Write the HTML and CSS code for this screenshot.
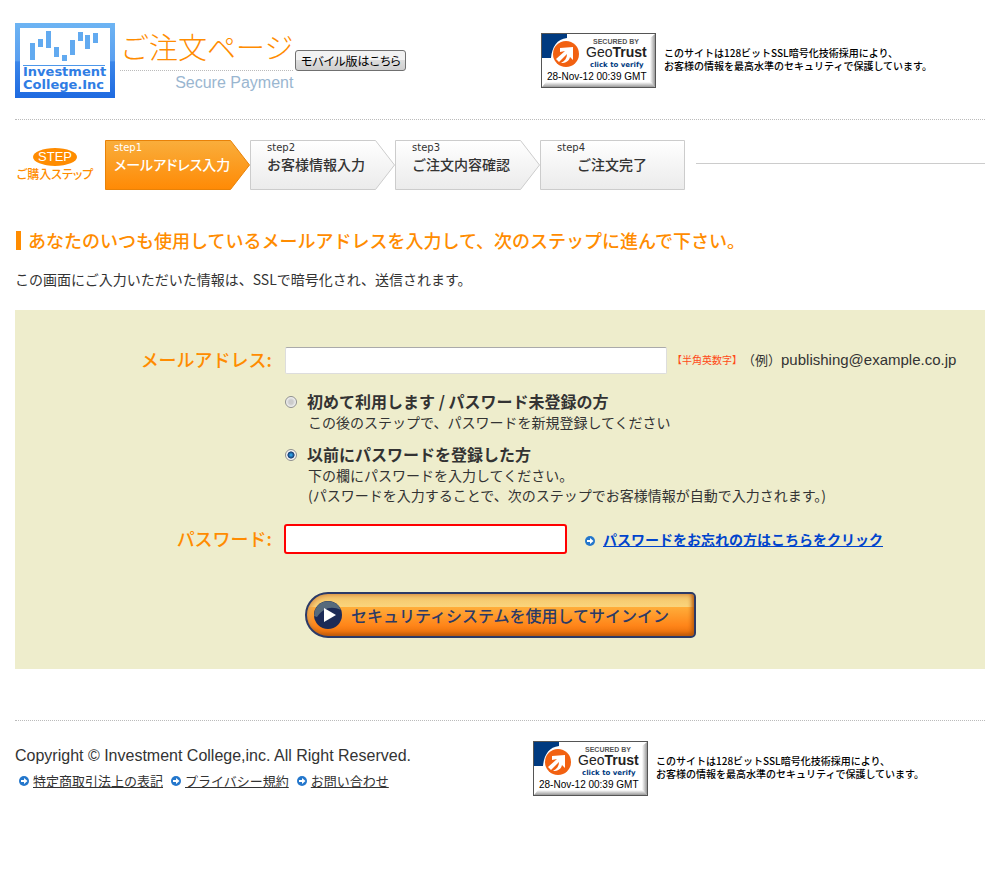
FILE: index.html
```
<!DOCTYPE html>
<html lang="ja">
<head>
    <meta charset="UTF-8">
    <meta name="viewport" content="width=device-width, initial-scale=1.0">
    <title>ご注文ページ</title>
    <link rel="stylesheet" href="styles.css">
</head>
<body>
    <!-- shared drawings -->
    <svg class="defs" width="0" height="0" aria-hidden="true">
        <defs>
            <linearGradient id="blue" x1="0" y1="0" x2="0" y2="1">
                <stop offset="0" stop-color="#6db4f3"/>
                <stop offset=".5" stop-color="#5a9ff0"/>
                <stop offset=".52" stop-color="#3b86ea"/>
                <stop offset="1" stop-color="#1e6ae0"/>
            </linearGradient>
            <linearGradient id="orange" x1="0" y1="0" x2="0" y2="1">
                <stop offset="0" stop-color="#f9ae3c"/>
                <stop offset="1" stop-color="#ff8a05"/>
            </linearGradient>
            <linearGradient id="gray" x1="0" y1="0" x2="0" y2="1">
                <stop offset="0" stop-color="#ffffff"/>
                <stop offset="1" stop-color="#ebebeb"/>
            </linearGradient>
            <linearGradient id="shade" x1="0" y1="0" x2="1" y2="0">
                <stop offset="0" stop-color="#ffffff"/>
                <stop offset="1" stop-color="#999999"/>
            </linearGradient>
            <linearGradient id="shadeDown" x1="0" y1="0" x2="0" y2="1">
                <stop offset="0" stop-color="#ffffff"/>
                <stop offset="1" stop-color="#999999"/>
            </linearGradient>
        </defs>
        <symbol id="bullet" viewBox="0 0 10 10">
            <circle cx="5" cy="5" r="5" fill="#2477cc"/>
            <path d="M2 4h3V2l3.5 3L5 8V6H2z" fill="#fff"/>
        </symbol>
        <symbol id="seal" viewBox="0 0 115 55">
            <rect x=".5" y=".5" width="114" height="54" fill="#fff" stroke="#555"/>
            <path d="M109 5l5-4v53l-5-4z" fill="url(#shade)"/>
            <path d="M5 49h105l4 5H1z" fill="url(#shadeDown)"/>
            <path d="M1 1h25v4C16 6 11 14 10 25H1z" fill="#003a80"/>
            <circle cx="25" cy="21" r="13" fill="#f26111"/>
            <path d="M19 15l13-1v13l-3-3c-1 4-4 6-9 6 4-2 6-5 6-9l-8 8-3-3 9-8-5 1z" fill="#fff"/>
        </symbol>
    </svg>

    <header class="header">
        <div class="brand">
            <svg class="logo" viewBox="0 0 100 75" role="img" aria-label="Investment College.Inc">
                <rect width="100" height="75" fill="url(#blue)"/>
                <rect x="5" y="5" width="90" height="64" fill="#fff"/>
                <g fill="#62aaf0">
                    <rect x="15" y="20" width="5" height="17"/>
                    <rect x="23" y="16" width="5" height="8"/>
                    <rect x="31" y="8" width="5" height="17"/>
                    <rect x="39" y="24" width="5" height="10"/>
                    <rect x="47" y="32" width="5" height="6"/>
                    <rect x="55" y="17" width="5" height="15"/>
                    <rect x="63" y="9" width="5" height="9"/>
                    <rect x="70" y="12" width="5" height="14"/>
                    <rect x="78" y="10" width="5" height="10"/>
                </g>
                <path d="M8 42.500h82" stroke="#4d97ea"/>
                <text x="8" y="53" class="logo-text">Investment</text>
                <text x="8" y="66" class="logo-text">College.Inc</text>
            </svg>
            <div class="title">
                <h1>ご注文ページ</h1>
                <p>Secure Payment</p>
            </div>
            <button type="button" class="mobile">モバイル版はこちら</button>
        </div>
        <div class="security">
            <svg class="seal" viewBox="0 0 115 55" role="img" aria-label="GeoTrust">
                <use href="#seal"/>
                <text x="52" y="11" class="seal-by">SECURED BY</text>
                <text x="45" y="24" class="seal-name">Geo<tspan class="seal-trust">Trust</tspan></text>
                <text x="49" y="34" class="seal-click">click to verify</text>
                <text x="6" y="47" class="seal-date">28-Nov-12 00:39 GMT</text>
            </svg>
            <p>このサイトは128ビットSSL暗号化技術採用により、<br>お客様の情報を最高水準のセキュリティで保護しています。</p>
        </div>
    </header>

    <div class="progress">
        <div class="progress-label">
            <span>STEP</span>
            <b>ご購入ステップ</b>
        </div>
        <ol class="steps">
            <li class="step active">
                <svg viewBox="0 0 145 50"><path d="M.5.5h125L144.500 25l-19 24.500H.5z" fill="url(#orange)" stroke="#e88208"/></svg>
                <div><small>step1</small>メールアドレス入力</div>
            </li>
            <li class="step">
                <svg viewBox="0 0 145 50"><path d="M.5.5h125L144.500 25l-19 24.500H.5z" fill="url(#gray)" stroke="#ccc"/></svg>
                <div><small>step2</small>お客様情報入力</div>
            </li>
            <li class="step">
                <svg viewBox="0 0 145 50"><path d="M.5.5h125L144.500 25l-19 24.500H.5z" fill="url(#gray)" stroke="#ccc"/></svg>
                <div><small>step3</small>ご注文内容確認</div>
            </li>
            <li class="step last">
                <svg viewBox="0 0 145 50"><path d="M.5.5h144v49H.5z" fill="url(#gray)" stroke="#ccc"/></svg>
                <div><small>step4</small><span>ご注文完了</span></div>
            </li>
        </ol>
        <hr>
    </div>

    <main>
        <h2>あなたのいつも使用しているメールアドレスを入力して、次のステップに進んで下さい。</h2>
        <p class="lead">この画面にご入力いただいた情報は、SSLで暗号化され、送信されます。</p>

        <form class="signin">
            <div class="row">
                <label class="name" for="email">メールアドレス:</label>
                <input type="text" id="email" class="email">
                <span class="note">【半角英数字】</span>
                <span class="example">（例）<span>publishing@example.co.jp</span></span>
            </div>
            <div class="choices">
                <div class="choice">
                    <input type="radio" name="member" id="new">
                    <div>
                        <label for="new">初めて利用します / パスワード未登録の方</label>
                        <p>この後のステップで、パスワードを新規登録してください</p>
                    </div>
                </div>
                <div class="choice">
                    <input type="radio" name="member" id="registered" checked>
                    <div>
                        <label for="registered">以前にパスワードを登録した方</label>
                        <p>下の欄にパスワードを入力してください。<br>(パスワードを入力することで、次のステップでお客様情報が自動で入力されます。)</p>
                    </div>
                </div>
            </div>
            <div class="row">
                <label class="name" for="password">パスワード:</label>
                <input type="password" id="password" class="password">
                <svg class="bullet"><use href="#bullet"/></svg>
                <a href="#" class="forgot">パスワードをお忘れの方はこちらをクリック</a>
            </div>
            <button type="submit" class="submit">
                <svg viewBox="0 0 28 28">
                    <circle cx="14" cy="14" r="14" fill="#1c2b57"/>
                    <path d="M1 9a14 14 0 0 1 26 0C18 5 10 6 3 16l-3-1z" fill="#566a7c"/>
                    <path d="M10 7l12 7-12 7z" fill="#fff"/>
                </svg>
                セキュリティシステムを使用してサインイン
            </button>
        </form>
    </main>

    <footer class="footer">
        <div class="legal">
            <p>Copyright © Investment College,inc. All Right Reserved.</p>
            <ul>
                <li><svg class="bullet"><use href="#bullet"/></svg><a href="#">特定商取引法上の表記</a></li>
                <li><svg class="bullet"><use href="#bullet"/></svg><a href="#">プライバシー規約</a></li>
                <li><svg class="bullet"><use href="#bullet"/></svg><a href="#">お問い合わせ</a></li>
            </ul>
        </div>
        <div class="security">
            <svg class="seal" viewBox="0 0 115 55" role="img" aria-label="GeoTrust">
                <use href="#seal"/>
                <text x="52" y="11" class="seal-by">SECURED BY</text>
                <text x="45" y="24" class="seal-name">Geo<tspan class="seal-trust">Trust</tspan></text>
                <text x="49" y="34" class="seal-click">click to verify</text>
                <text x="6" y="47" class="seal-date">28-Nov-12 00:39 GMT</text>
            </svg>
            <p>このサイトは128ビットSSL暗号化技術採用により、<br>お客様の情報を最高水準のセキュリティで保護しています。</p>
        </div>
    </footer>
</body>
</html>
```
FILE: styles.css
```
* {
    box-sizing: border-box;
}

body {
    margin: 0;
    padding: 23px 15px;
    background-color: #fff;
    color: #333;
    font-family: "Noto Sans CJK JP", sans-serif;
    font-size: 14px;
    line-height: 20px;
}

h1, h2, p, ul, ol {
    margin: 0;
    padding: 0;
    list-style: none;
}

.defs {
    position: absolute;
}

/* header */
.header {
    display: flex;
    justify-content: space-between;
    height: 97px;
    border-bottom: 1px dotted #bbb;
}

.brand {
    display: flex;
}

.logo {
    width: 100px;
    height: 75px;
}

.logo-text {
    fill: #2f7de4;
    font-family: "DejaVu Sans", sans-serif;
    font-weight: bold;
    font-size: 13px;
}

.title {
    margin: 0 2px 0 5px;
}

.title h1 {
    height: 48px;
    border-bottom: 1px dotted #bbb;
    color: #ff8c00;
    font-size: 29px;
    font-weight: 300;
    line-height: 46px;
}

.title p {
    color: #9ab6d0;
    font-family: "Liberation Sans", sans-serif;
    font-size: 16px;
    line-height: 24px;
    text-align: right;
}

.mobile {
    width: 111px;
    height: 21px;
    margin-top: 27px;
    padding: 0;
    border: 1px solid #707070;
    border-radius: 3px;
    background: linear-gradient(#f2f2f2 50%, #dddddd 50%, #cfcfcf);
    color: #000;
    font-family: inherit;
    font-size: 12px;
    line-height: 18px;
    font-feature-settings: "palt";
    white-space: nowrap;
}

.security {
    display: flex;
    gap: 8px;
    width: 444px;
    padding-top: 10px;
}

.security p {
    padding-top: 13px;
    color: #000;
    font-size: 10px;
    font-weight: 500;
    line-height: 13px;
}

.seal {
    flex: none;
    width: 115px;
    height: 55px;
}

.seal-by {
    fill: #555;
    font: bold 7px "Liberation Sans", sans-serif;
}

.seal-name {
    fill: #222;
    font: 14px "Liberation Sans", sans-serif;
}

.seal-trust {
    font-weight: bold;
}

.seal-click {
    fill: #003a80;
    font: bold 7px "DejaVu Sans", sans-serif;
}

.seal-date {
    fill: #000;
    font: 10px "Liberation Sans", sans-serif;
}

/* order steps */
.progress {
    display: flex;
    margin-top: 20px;
}

.progress-label {
    display: flex;
    flex-direction: column;
    align-items: center;
    width: 80px;
    margin-right: 10px;
    padding-top: 8px;
    color: #ff8c00;
}

.progress-label span {
    width: 44px;
    height: 18px;
    border-radius: 50%;
    background-color: #ff8c00;
    color: #fff;
    font-family: "Liberation Sans", sans-serif;
    font-size: 13px;
    line-height: 18px;
    text-align: center;
}

.progress-label b {
    font-size: 12px;
    font-weight: 500;
    line-height: 16px;
    font-feature-settings: "palt";
    white-space: nowrap;
}

.steps {
    display: flex;
}

.step {
    display: grid;
    width: 145px;
    height: 50px;
    font-size: 14px;
    font-weight: 500;
}

.step svg,
.step div {
    grid-area: 1 / 1;
}

.step div {
    padding: 2px 0 0 17px;
    white-space: nowrap;
}

.step small {
    display: block;
    font-family: "DejaVu Sans", sans-serif;
    font-size: 10px;
    line-height: 12px;
}

.step.active {
    color: #fff;
    font-feature-settings: "palt";
}

.step.active div {
    padding-left: 9px;
}

.step.last span {
    padding-left: 20px;
}

.progress hr {
    flex: 1;
    height: 0;
    margin: 23px 0 0 11px;
    border: 0;
    border-top: 1px solid #ccc;
}

/* sign in */
h2 {
    display: flex;
    align-items: center;
    margin-top: 39px;
    color: #ff8c00;
    font-size: 18px;
    font-weight: 500;
    line-height: 20px;
}

h2::before {
    content: "";
    width: 5px;
    height: 19px;
    margin: 2px 7px 0 1px;
    background-color: #ff8c00;
}

.lead {
    margin-top: 19px;
}

.signin {
    margin-top: 21px;
    padding: 35px 0 31px;
    background-color: #eeedcc;
}

.row {
    display: flex;
    align-items: center;
    height: 30px;
}

.name {
    width: 257px;
    margin-right: 13px;
    padding-bottom: 2px;
    color: #ff8c00;
    font-size: 18px;
    font-weight: 500;
    text-align: right;
}

.email {
    width: 382px;
    height: 27px;
    border: 1px solid #dddddd;
    border-top-color: #aaa;
    border-radius: 2px;
    background-color: #fff;
}

.note {
    margin-left: 5px;
    color: #ff4a17;
    font-size: 10px;
    white-space: nowrap;
}

.example {
    font-size: 13px;
    white-space: nowrap;
}

.example span {
    font-family: "Liberation Sans", sans-serif;
    font-size: 15px;
}

.choices {
    padding: 17px 0 19px 270px;
}

.choice {
    display: flex;
    gap: 10px;
}

.choice + .choice {
    margin-top: 13px;
}

.choice input {
    appearance: none;
    flex: none;
    width: 12px;
    height: 12px;
    margin: 4px 0 0;
    border: 1px solid #8e8f8f;
    border-radius: 50%;
    background: radial-gradient(#cccccc 30%, #f4f4f4 70%);
}

.choice input:checked {
    background: radial-gradient(#2d9be0 10%, #173a70 45%, #f4f4f4 55%);
}

.choice label {
    display: block;
    margin-bottom: 2px;
    font-size: 16px;
    font-weight: bold;
    line-height: 18px;
}

.choice p {
    padding-left: 1px;
}

.password {
    width: 283px;
    height: 30px;
    margin-left: -1px;
    border: 2px solid #f00;
    border-radius: 3px;
    background-color: #fff;
}

.bullet {
    flex: none;
    width: 10px;
    height: 10px;
}

.row .bullet {
    margin: 4px 8px 0 18px;
}

.forgot {
    color: #0044cc;
    font-weight: bold;
}

.submit {
    display: flex;
    align-items: center;
    gap: 9px;
    width: 391px;
    height: 46px;
    margin: 38px 0 0 290px;
    padding: 0 7px;
    border: 2px solid #2b3a67;
    border-radius: 23px 5px 5px 23px;
    background: linear-gradient(#f3c468, #fad47c 30%, #ffad3a 31%, #ff8519 75%, #e66c08);
    box-shadow: inset -2px -2px 4px #b3540a, inset 2px 2px 4px #e3a557;
    color: #2b3a67;
    font-family: inherit;
    font-size: 16px;
    font-weight: 500;
    white-space: nowrap;
}

.submit svg {
    flex: none;
    width: 28px;
    height: 28px;
}

/* footer */
.footer {
    display: flex;
    justify-content: space-between;
    margin-top: 51px;
    padding-top: 10px;
    border-top: 1px dotted #bbb;
}

.footer .security {
    width: 452px;
}

.legal {
    padding-top: 15px;
}

.legal p {
    font-family: "Liberation Sans", sans-serif;
    font-size: 16px;
}

.legal ul {
    display: flex;
    gap: 8px;
    margin-top: 5px;
    padding-left: 4px;
    font-size: 13px;
}

.legal li {
    display: flex;
    align-items: center;
    gap: 4px;
}

.legal a {
    color: #333;
}
```
